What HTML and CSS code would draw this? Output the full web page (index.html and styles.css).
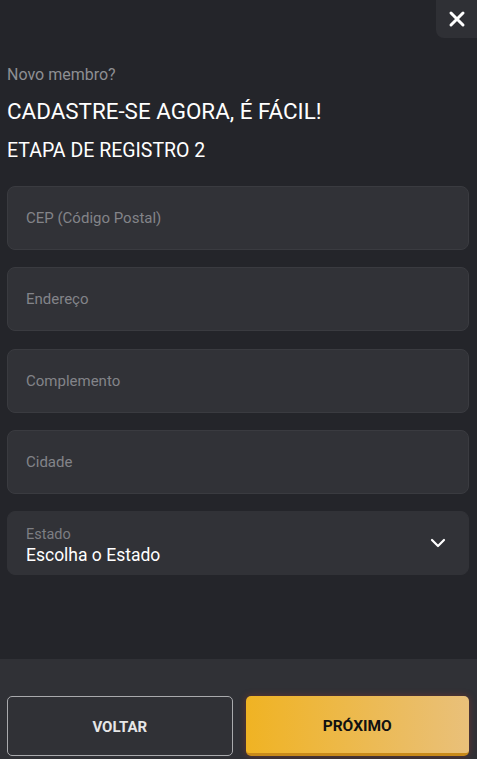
FILE: index.html
```html
<!DOCTYPE html>
<html lang="pt-BR">

<head>
  <meta charset="UTF-8">
  <meta name="viewport" content="width=device-width, initial-scale=1.0">
  <title>Cadastro</title>
  <link rel="stylesheet" href="styles.css">
</head>

<body>
  <div class="modal">
    <div class="topo">
      <div class="fechar">
        <svg width="18" height="18" viewBox="0 0 18 18">
          <path d="M3 3 L15 15 M15 3 L3 15" stroke="#fff" stroke-width="3" stroke-linecap="round"></path>
        </svg>
      </div>
    </div>

    <div class="form">
      <div class="sub">Novo membro?</div>
      <div class="titre">CADASTRE-SE AGORA, É FÁCIL!</div>
      <div class="etapa">ETAPA DE REGISTRO 2</div>

      <div class="champs">
        <div class="champ">CEP (Código Postal)</div>
        <div class="champ">Endereço</div>
        <div class="champ">Complemento</div>
        <div class="champ">Cidade</div>
        <div class="champ select">
          <div class="select-texte">
            <div class="label">Estado</div>
            <div class="valeur">Escolha o Estado</div>
          </div>
          <svg width="16" height="10" viewBox="0 0 16 10">
            <path d="M2 2 L8 8 L14 2" stroke="#fff" stroke-width="2.2" fill="none" stroke-linecap="round" stroke-linejoin="round"></path>
          </svg>
        </div>
      </div>
    </div>

    <div class="footer">
      <div class="bouton voltar">VOLTAR</div>
      <div class="bouton proximo">PRÓXIMO</div>
    </div>
  </div>
</body>

</html>
```

FILE: styles.css
```css
body {
  margin: 0;
  font-family: Roboto, "Liberation Sans", sans-serif;
  background-color: #24252a;
  color: #fff;
}

.modal {
  display: flex;
  flex-direction: column;
  height: 759px;
}

.topo {
  display: flex;
  justify-content: flex-end;
}

.fechar {
  width: 41px;
  height: 38px;
  display: flex;
  align-items: center;
  justify-content: center;
  background-color: #2f3035;
  border-bottom-left-radius: 8px;
}

.form {
  flex: 1;
  padding: 26px 8px 0 7px;
}

.sub {
  font-size: 16px;
  color: #8e8f93;
  line-height: 22px;
}

.titre {
  font-size: 22.4px;
  line-height: 26px;
  margin-top: 12px;
}

.etapa {
  font-size: 19.5px;
  line-height: 22px;
  margin-top: 16px;
}

.champs {
  display: flex;
  flex-direction: column;
  gap: 17.25px;
  margin-top: 24px;
}

.champ {
  box-sizing: border-box;
  height: 64px;
  padding: 0 18px;
  display: flex;
  align-items: center;
  font-size: 15px;
  color: #838489;
  background-color: #313237;
  border: 1px solid #3a3b40;
  border-radius: 8px;
}

.select {
  justify-content: space-between;
  border-color: #313237;
  padding-right: 22px;
}

.select-texte {
  margin-top: 7px;
}

.label {
  font-size: 14.5px;
  color: #7d7e83;
  line-height: 16px;
}

.valeur {
  font-size: 17.5px;
  color: #fff;
  line-height: 24px;
}

.footer {
  height: 100px;
  background-color: #303136;
  display: flex;
  gap: 13px;
  padding: 37px 8px 0 7px;
  box-sizing: border-box;
}

.bouton {
  flex: 1;
  height: 60px;
  box-sizing: border-box;
  display: flex;
  align-items: center;
  justify-content: center;
  padding-top: 2px;
  font-size: 15px;
  font-weight: 700;
  border-radius: 5px;
}

.voltar {
  border: 1px solid #a9aaad;
  color: #e6e6e7;
}

.proximo {
  font-size: 15.5px;
  color: #111;
  background: linear-gradient(to right, #f0b323, #e9c07a);
  border-bottom: 3px solid #c98a1a;
  box-shadow: 0 0 7px rgba(200, 60, 40, 0.35);
}
```
